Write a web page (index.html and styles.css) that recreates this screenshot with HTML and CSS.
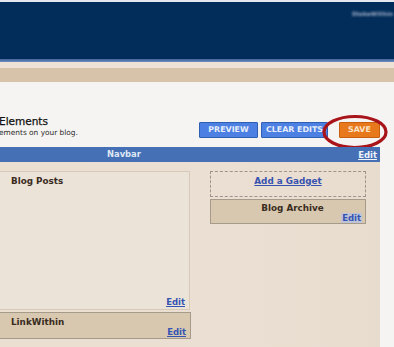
FILE: index.html
```html
<!DOCTYPE html>
<html>
<head>
<meta charset="utf-8">
<link rel="stylesheet" href="styles.css">
</head>
<body>
<div class="page">
  <div class="topline"></div>
  <header class="header">
    <span class="user">StokeWithin</span>
  </header>
  <div class="rule-blue"></div>
  <div class="band-light"></div>
  <div class="band-tan"></div>
  <main class="main">
    <div class="title-row">
      <div class="title-block">
        <h1 class="title">Elements</h1>
        <p class="subtitle">ements on your blog.</p>
      </div>
      <div class="actions">
        <button class="btn btn-blue">PREVIEW</button>
        <button class="btn btn-blue">CLEAR EDITS</button>
        <button class="btn btn-orange">SAVE</button>
        <svg class="circle" width="70" height="40" viewBox="0 0 70 40">
          <ellipse cx="35" cy="19" rx="31" ry="15.5" fill="none" stroke="#a8141a" stroke-width="3.2"/>
        </svg>
      </div>
    </div>
    <section class="panel">
      <div class="navbar">
        <span class="navbar-title">Navbar</span>
        <a class="edit edit-light">Edit</a>
      </div>
      <div class="panel-body">
        <div class="col-main">
          <div class="widget widget-posts">
            <div class="widget-title">Blog Posts</div>
            <a class="edit">Edit</a>
          </div>
          <div class="widget widget-tan widget-link">
            <div class="widget-title">LinkWithin</div>
            <a class="edit">Edit</a>
          </div>
        </div>
        <div class="col-side">
          <div class="add-gadget"><a class="add-link">Add a Gadget</a></div>
          <div class="widget widget-tan widget-archive">
            <div class="widget-title center">Blog Archive</div>
            <a class="edit edit-selected">Edit</a>
          </div>
        </div>
      </div>
    </section>
  </main>
</div>
</body>
</html>
```
FILE: styles.css
```css
* { box-sizing: border-box; }
html, body { margin: 0; padding: 0; }
body {
  width: 394px;
  height: 347px;
  overflow: hidden;
  background: #f6f4f2;
  font-family: "DejaVu Sans", Verdana, sans-serif;
}
.page { width: 394px; }
.topline { height: 2px; background: #e4e8ee; }
.header {
  height: 57px;
  background: #022d5a;
  display: flex;
  justify-content: flex-end;
  align-items: flex-start;
  padding-top: 8px;
  padding-right: 1px;
}
.user {
  font-size: 6px;
  font-weight: bold;
  color: #97a6c0;
  filter: blur(0.8px);
}
.rule-blue { height: 3px; background: linear-gradient(#3f639c, #6d8cbd); }
.band-light { height: 6px; background: #eee2d6; }
.band-tan { height: 14px; background: #d6c3a9; }
.main { background: #f6f4f2; padding-top: 32px; }
.title-row {
  display: flex;
  justify-content: space-between;
  align-items: flex-start;
  width: 380px;
  height: 33px;
}
.title-block { margin-left: -1px; }
.title {
  margin: 0;
  font-size: 10.5px;
  line-height: 14px;
  font-weight: normal;
  color: #111;
  -webkit-text-stroke: 0.25px #111;
}
.subtitle {
  margin: 0;
  font-size: 7.4px;
  line-height: 10px;
  color: #2a2a2a;
}
.actions {
  position: relative;
  display: flex;
  gap: 3px;
  margin-top: 8px;
}
.btn {
  height: 16px;
  padding: 0;
  border: 1px solid #2f5fb2;
  font-family: "DejaVu Sans", Verdana, sans-serif;
  font-size: 7.9px;
  font-weight: bold;
  color: #e8eef9;
  line-height: 14px;
  border-radius: 1px;
  white-space: nowrap;
  text-align: center;
}
.btn-blue { background: #4d80e3; }
.btn:nth-child(1) { width: 59px; }
.btn:nth-child(2) { width: 67px; }
.btn-orange {
  background: #e8781c;
  border-color: #c96010;
  color: #fbe4c8;
  width: 41px;
  margin-left: 8px;
}
.circle {
  position: absolute;
  right: -10px;
  top: -9px;
  pointer-events: none;
}
.panel { width: 380px; }
.navbar {
  height: 15px;
  background: #4670b6;
  position: relative;
  display: flex;
  align-items: center;
  justify-content: flex-end;
  padding-right: 3px;
}
.navbar-title {
  position: absolute;
  left: 107px;
  top: 2px;
  font-size: 8.4px;
  font-weight: bold;
  color: #dfe7f4;
}
.edit {
  font-size: 8.5px;
  font-weight: bold;
  color: #3553b3;
  text-decoration: underline;
  align-self: flex-end;
}
.edit-light { color: #eef2fa; align-self: center; }
.edit-selected { background: #bfc3d6; text-decoration: none; padding: 0 1px; }
.panel-body {
  height: 185px;
  background: linear-gradient(90deg, #eadfd1, #eadfd2 60%, #e8dccf);
  display: flex;
  padding-top: 9px;
}
.col-main {
  width: 192px;
  margin-left: -2px;
  display: flex;
  flex-direction: column;
  gap: 2px;
}
.widget {
  display: flex;
  flex-direction: column;
  justify-content: space-between;
  padding: 4px 4px 2px 12px;
}
.widget-posts {
  height: 139px;
  background: #ece3d8;
  border: 1px solid #d8cab9;
}
.widget-tan {
  background: #d8c8b0;
  border: 1px solid #a69a8b;
}
.widget-link { height: 27px; padding-top: 4px; margin-right: -1px; }
.widget-title {
  font-size: 8.8px;
  font-weight: bold;
  color: #3a2c1e;
}
.center { text-align: center; padding-left: 8px; }
.col-side {
  width: 156px;
  margin-left: 20px;
  display: flex;
  flex-direction: column;
  gap: 2px;
}
.add-gadget {
  height: 26px;
  border: 1px dashed #9d958c;
  text-align: center;
  padding-top: 1px;
  line-height: 11px;
}
.add-link {
  font-size: 8.8px;
  font-weight: bold;
  color: #3753b0;
  text-decoration: underline;
}
.widget-archive { height: 25px; padding: 3px 3px 1px 4px; }
```
